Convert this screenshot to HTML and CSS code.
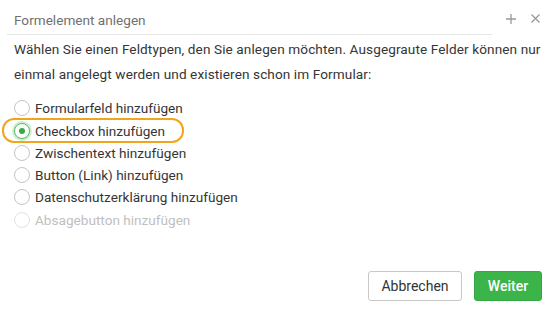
FILE: index.html
```html
<!DOCTYPE html>
<html lang="de">
<head>
    <meta charset="UTF-8">
    <meta name="viewport" content="width=device-width, initial-scale=1.0">
    <title>Formelement anlegen</title>
    <link rel="stylesheet" href="styles.css">
</head>
<body>
    <div class="dialog">
        <div class="dialog-header">
            <div class="dialog-title">Formelement anlegen</div>
            <div class="header-actions">
                <button class="icon-btn" title="Maximieren">
                    <svg width="12" height="12" viewBox="0 0 12 12"><path d="M6 1v10M1 6h10" stroke="#999" stroke-width="1.3"/></svg>
                </button>
                <button class="icon-btn" title="Schließen">
                    <svg width="11" height="11" viewBox="0 0 11 11"><path d="M1.5 1.5l8 8M9.5 1.5l-8 8" stroke="#999" stroke-width="1.3"/></svg>
                </button>
            </div>
        </div>

        <p class="intro">Wählen Sie einen Feldtypen, den Sie anlegen möchten. Ausgegraute Felder können nur einmal angelegt werden und existieren schon im Formular:</p>

        <div class="options">
            <label class="option"><input type="radio" name="type"><span>Formularfeld hinzufügen</span></label>
            <label class="option focused"><input type="radio" name="type" checked><span>Checkbox hinzufügen</span></label>
            <label class="option"><input type="radio" name="type"><span>Zwischentext hinzufügen</span></label>
            <label class="option"><input type="radio" name="type"><span>Button (Link) hinzufügen</span></label>
            <label class="option"><input type="radio" name="type"><span>Datenschutzerklärung hinzufügen</span></label>
            <label class="option disabled"><input type="radio" name="type" disabled><span>Absagebutton hinzufügen</span></label>
        </div>

        <div class="dialog-footer">
            <button class="btn btn-cancel">Abbrechen</button>
            <button class="btn btn-next">Weiter</button>
        </div>
    </div>
</body>
</html>
```

FILE: styles.css
```css
body {
    margin: 0;
    background: #fff;
    font-family: Roboto, "Noto Sans", sans-serif;
    color: #333;
}
.dialog {
    width: 549px;
    height: 319px;
    box-sizing: border-box;
    padding: 0 7px;
    display: flex;
    flex-direction: column;
}
.dialog-header {
    display: flex;
    align-items: center;
    height: 35px;
}
.dialog-title {
    width: 493px;
    box-sizing: border-box;
    height: 35px;
    line-height: 41px;
    padding-left: 7px;
    font-size: 13.6px;
    color: #707070;
    border-bottom: 1px solid #e6e6e6;
}
.header-actions {
    display: flex;
    gap: 10px;
    margin-left: 12px;
    margin-top: 2px;
}
.icon-btn {
    border: none;
    background: none;
    padding: 0;
    width: 14px;
    height: 16px;
    display: flex;
    align-items: center;
    justify-content: center;
    cursor: pointer;
}
.intro {
    margin: 2px 0 0 7px;
    font-size: 13.6px;
    letter-spacing: 0.1px;
    line-height: 25px;
    color: #353535;
}
.options {
    display: flex;
    flex-direction: column;
    align-items: flex-start;
    margin-top: 10px;
}
.option {
    display: flex;
    align-items: center;
    height: 22.3px;
    font-size: 13.6px;
    color: #353535;
    margin-left: -5px;
    padding: 0 17px 0 10px;
    white-space: nowrap;
    box-sizing: border-box;
    border: 2px solid transparent;
    border-radius: 12px;
}
.option input {
    appearance: none;
    flex: none;
    width: 16px;
    height: 16px;
    margin: 0 5px 0 0;
    border: 1px solid #c4c4c4;
    border-radius: 50%;
    background: #fff;
    position: relative;
}
.option input:checked {
    border-color: #4fbf5a;
    box-shadow: 0 0 0 2px #cdeed0;
}
.option input:checked::after {
    content: "";
    position: absolute;
    left: 4px;
    top: 4px;
    width: 6px;
    height: 6px;
    border-radius: 50%;
    background: #3aa84a;
}
.option.focused {
    border-color: #f2a51c;
    height: 25px;
    margin: -1px 0 -1.6px -5px;
}
.option.disabled {
    color: #c0c0c0;
}
.option.disabled input {
    border-color: #e2e2e2;
}
.dialog-footer {
    margin-top: auto;
    margin-bottom: 18px;
    display: flex;
    justify-content: flex-end;
    gap: 12px;
}
.btn {
    height: 30px;
    border-radius: 3px;
    font-family: Roboto, sans-serif;
    font-size: 14px;
    cursor: pointer;
}
.btn-cancel {
    width: 94px;
    background: #fff;
    border: 1px solid #c8c8c8;
    color: #333;
}
.btn-next {
    width: 68px;
    background: #3bb54a;
    border: 1px solid #35a944;
    color: #fff;
    font-weight: 500;
}
```
